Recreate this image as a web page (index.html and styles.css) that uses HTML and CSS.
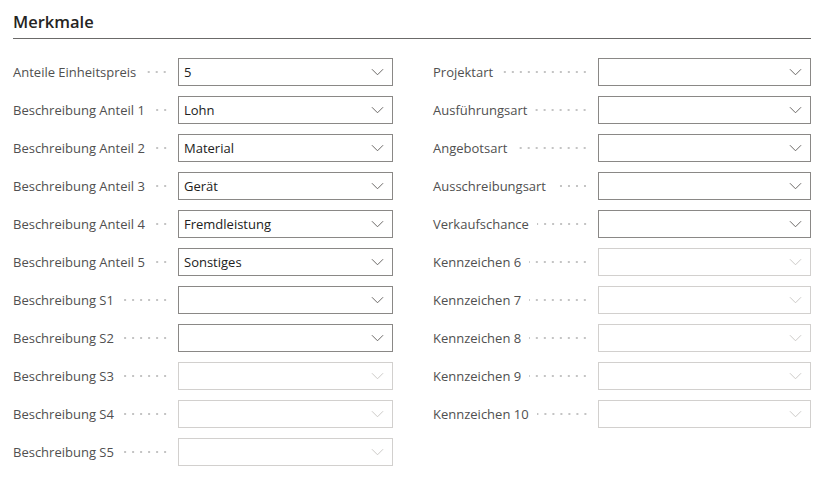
FILE: index.html
```html
<!DOCTYPE html>
<html lang="de">
<head>
<meta charset="utf-8">
<title>Merkmale</title>
<link rel="stylesheet" href="styles.css">
</head>
<body>
<section class="card">
  <h2 class="title">Merkmale</h2>
  <div class="form">
    <div class="col">
      <div class="row"><span class="label">Anteile Einheitspreis</span><span class="leader"></span><div class="field"><span class="value">5</span><svg class="chev" viewBox="0 0 14 8"><path d="M1 1 L7 7 L13 1"/></svg></div></div>
      <div class="row"><span class="label">Beschreibung Anteil 1</span><span class="leader"></span><div class="field"><span class="value">Lohn</span><svg class="chev" viewBox="0 0 14 8"><path d="M1 1 L7 7 L13 1"/></svg></div></div>
      <div class="row"><span class="label">Beschreibung Anteil 2</span><span class="leader"></span><div class="field"><span class="value">Material</span><svg class="chev" viewBox="0 0 14 8"><path d="M1 1 L7 7 L13 1"/></svg></div></div>
      <div class="row"><span class="label">Beschreibung Anteil 3</span><span class="leader"></span><div class="field"><span class="value">Gerät</span><svg class="chev" viewBox="0 0 14 8"><path d="M1 1 L7 7 L13 1"/></svg></div></div>
      <div class="row"><span class="label">Beschreibung Anteil 4</span><span class="leader"></span><div class="field"><span class="value">Fremdleistung</span><svg class="chev" viewBox="0 0 14 8"><path d="M1 1 L7 7 L13 1"/></svg></div></div>
      <div class="row"><span class="label">Beschreibung Anteil 5</span><span class="leader"></span><div class="field"><span class="value">Sonstiges</span><svg class="chev" viewBox="0 0 14 8"><path d="M1 1 L7 7 L13 1"/></svg></div></div>
      <div class="row"><span class="label">Beschreibung S1</span><span class="leader"></span><div class="field"><span class="value"></span><svg class="chev" viewBox="0 0 14 8"><path d="M1 1 L7 7 L13 1"/></svg></div></div>
      <div class="row"><span class="label">Beschreibung S2</span><span class="leader"></span><div class="field"><span class="value"></span><svg class="chev" viewBox="0 0 14 8"><path d="M1 1 L7 7 L13 1"/></svg></div></div>
      <div class="row"><span class="label">Beschreibung S3</span><span class="leader"></span><div class="field disabled"><span class="value"></span><svg class="chev" viewBox="0 0 14 8"><path d="M1 1 L7 7 L13 1"/></svg></div></div>
      <div class="row"><span class="label">Beschreibung S4</span><span class="leader"></span><div class="field disabled"><span class="value"></span><svg class="chev" viewBox="0 0 14 8"><path d="M1 1 L7 7 L13 1"/></svg></div></div>
      <div class="row"><span class="label">Beschreibung S5</span><span class="leader"></span><div class="field disabled"><span class="value"></span><svg class="chev" viewBox="0 0 14 8"><path d="M1 1 L7 7 L13 1"/></svg></div></div>
    </div>
    <div class="col">
      <div class="row"><span class="label">Projektart</span><span class="leader"></span><div class="field"><span class="value"></span><svg class="chev" viewBox="0 0 14 8"><path d="M1 1 L7 7 L13 1"/></svg></div></div>
      <div class="row"><span class="label">Ausführungsart</span><span class="leader"></span><div class="field"><span class="value"></span><svg class="chev" viewBox="0 0 14 8"><path d="M1 1 L7 7 L13 1"/></svg></div></div>
      <div class="row"><span class="label">Angebotsart</span><span class="leader"></span><div class="field"><span class="value"></span><svg class="chev" viewBox="0 0 14 8"><path d="M1 1 L7 7 L13 1"/></svg></div></div>
      <div class="row"><span class="label">Ausschreibungsart</span><span class="leader"></span><div class="field"><span class="value"></span><svg class="chev" viewBox="0 0 14 8"><path d="M1 1 L7 7 L13 1"/></svg></div></div>
      <div class="row"><span class="label">Verkaufschance</span><span class="leader"></span><div class="field"><span class="value"></span><svg class="chev" viewBox="0 0 14 8"><path d="M1 1 L7 7 L13 1"/></svg></div></div>
      <div class="row"><span class="label">Kennzeichen 6</span><span class="leader"></span><div class="field disabled"><span class="value"></span><svg class="chev" viewBox="0 0 14 8"><path d="M1 1 L7 7 L13 1"/></svg></div></div>
      <div class="row"><span class="label">Kennzeichen 7</span><span class="leader"></span><div class="field disabled"><span class="value"></span><svg class="chev" viewBox="0 0 14 8"><path d="M1 1 L7 7 L13 1"/></svg></div></div>
      <div class="row"><span class="label">Kennzeichen 8</span><span class="leader"></span><div class="field disabled"><span class="value"></span><svg class="chev" viewBox="0 0 14 8"><path d="M1 1 L7 7 L13 1"/></svg></div></div>
      <div class="row"><span class="label">Kennzeichen 9</span><span class="leader"></span><div class="field disabled"><span class="value"></span><svg class="chev" viewBox="0 0 14 8"><path d="M1 1 L7 7 L13 1"/></svg></div></div>
      <div class="row"><span class="label">Kennzeichen 10</span><span class="leader"></span><div class="field disabled"><span class="value"></span><svg class="chev" viewBox="0 0 14 8"><path d="M1 1 L7 7 L13 1"/></svg></div></div>
    </div>
  </div>
</section>
</body>
</html>
```

FILE: styles.css
```css
html, body {
  margin: 0;
  padding: 0;
  background: #ffffff;
}

body {
  font-family: "Open Sans", "Noto Sans", "Liberation Sans", sans-serif;
  color: #505050;
}

.card {
  padding: 0 16px 0 13px;
}

.title {
  margin: 0;
  padding-top: 10px;
  box-sizing: border-box;
  height: 39px;
  font-size: 16.5px;
  line-height: 24px;
  font-weight: 600;
  color: #252423;
  border-bottom: 1px solid #6b6a69;
}

.form {
  display: grid;
  grid-template-columns: 380px 378px;
  column-gap: 40px;
  margin-top: 19px;
}

.col {
  display: flex;
  flex-direction: column;
  gap: 10px;
}

.row {
  display: flex;
  align-items: center;
  height: 28px;
}

.label {
  font-size: 13px;
  line-height: 18px;
  white-space: nowrap;
  color: #505050;
  margin-right: 8px;
}

.leader {
  flex: 1;
  height: 4px;
  margin-right: 9px;
  background-image: radial-gradient(circle, #c4c4c4 0.9px, transparent 1.3px);
  background-size: 8px 4px;
  background-repeat: repeat-x;
  background-position: right center;
  min-width: 0;
}

.field {
  flex: 0 0 215px;
  height: 28px;
  box-sizing: border-box;
  border: 1px solid #8a8886;
  display: flex;
  align-items: center;
  justify-content: space-between;
  padding: 0 8px 0 5px;
}

.col:last-child .field {
  flex-basis: 213px;
}

.value {
  font-size: 13px;
  color: #212121;
  line-height: 18px;
}

.chev {
  width: 13px;
  height: 8px;
  fill: none;
  stroke: #605e5c;
  stroke-width: 1;
}

.field.disabled {
  border-color: #d2d0ce;
}

.field.disabled .chev {
  stroke: #c8c6c4;
}
```
